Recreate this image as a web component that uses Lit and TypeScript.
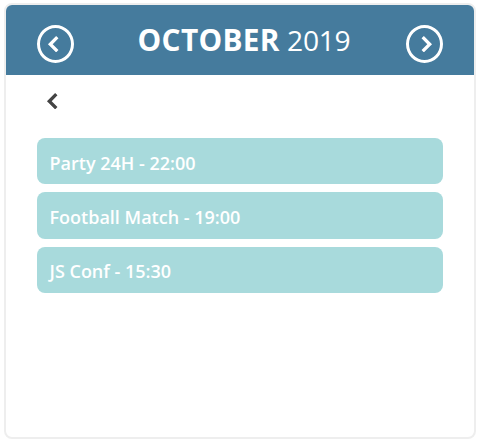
import { LitElement, html, css, svg } from "lit";
import { customElement, state } from "lit/decorators.js";

interface CalendarEvent {
  title: string;
  time: string;
}

const chevron = (points: string) => html`
  <svg class="chevron" viewBox="0 0 12 16" aria-hidden="true">
    ${svg`<polyline points=${points} fill="none" stroke="currentColor" stroke-width="3.3"></polyline>`}
  </svg>
`;
const chevronLeft = () => chevron("10.3,1.2 3.3,8.3 10.3,15.2");
const chevronRight = () => chevron("1.7,1.2 8.7,8.3 1.7,15.2");

@customElement("app-root")
export class AppRoot extends LitElement {
  @state() private events: CalendarEvent[] = [
    { title: "Party 24H", time: "22:00" },
    { title: "Football Match", time: "19:00" },
    { title: "JS Conf", time: "15:30" },
  ];

  static styles = css`
    :host {
      display: block;
      box-sizing: border-box;
      height: 445px;
      padding: 3px 7px 6px 4px;
      background: #fff;
      font-family: "Open Sans", "Noto Sans", sans-serif;
    }
    .card {
      box-sizing: border-box;
      height: 436px;
      border: 2px solid #eee;
      border-radius: 8px;
      overflow: hidden;
    }
    .header {
      box-sizing: border-box;
      height: 70px;
      padding: 8px 31px 0;
      display: flex;
      align-items: center;
      justify-content: space-between;
      background: #457b9d;
      color: #fff;
    }
    button {
      box-sizing: border-box;
      display: flex;
      align-items: center;
      justify-content: center;
      margin: 0;
      padding: 0;
      border: 0;
      background: none;
      color: inherit;
      cursor: pointer;
    }
    .nav {
      width: 37px;
      height: 38px;
      border: 3px solid #fff;
      border-radius: 50%;
    }
    .prev {
      padding-right: 5px;
    }
    .next {
      padding-left: 5px;
    }
    .chevron {
      display: block;
      width: 12px;
      height: 16px;
    }
    .title {
      margin: 0 0 9px 8px;
      font-size: 28.2px;
      line-height: 40px;
      font-weight: 400;
      white-space: nowrap;
    }
    .month {
      font-size: 29.8px;
      font-weight: 700;
      letter-spacing: 0.3px;
      text-transform: uppercase;
    }
    .year {
      letter-spacing: -0.3px;
    }
    .body {
      padding: 18px 31px 0;
    }
    .back {
      margin-left: 9px;
      color: #444;
    }
    .events {
      list-style: none;
      display: grid;
      gap: 8px;
      margin: 29px 0 0;
      padding: 0;
    }
    .event {
      box-sizing: border-box;
      height: 46.4px;
      padding: 4.6px 12.5px 0;
      border-radius: 8px;
      background: #a8dadc;
      color: #fff;
      font-size: 18px;
      font-weight: 600;
      line-height: 40px;
      white-space: nowrap;
    }
  `;

  render() {
    return html`
      <section class="card">
        <header class="header">
          <button class="nav prev" aria-label="Previous month">${chevronLeft()}</button>
          <h1 class="title"><span class="month">October</span> <span class="year">2019</span></h1>
          <button class="nav next" aria-label="Next month">${chevronRight()}</button>
        </header>
        <div class="body">
          <button class="back" aria-label="Back to month">${chevronLeft()}</button>
          <ul class="events">
            ${this.events.map((e) => html`<li class="event">${e.title} - ${e.time}</li>`)}
          </ul>
        </div>
      </section>
    `;
  }
}
